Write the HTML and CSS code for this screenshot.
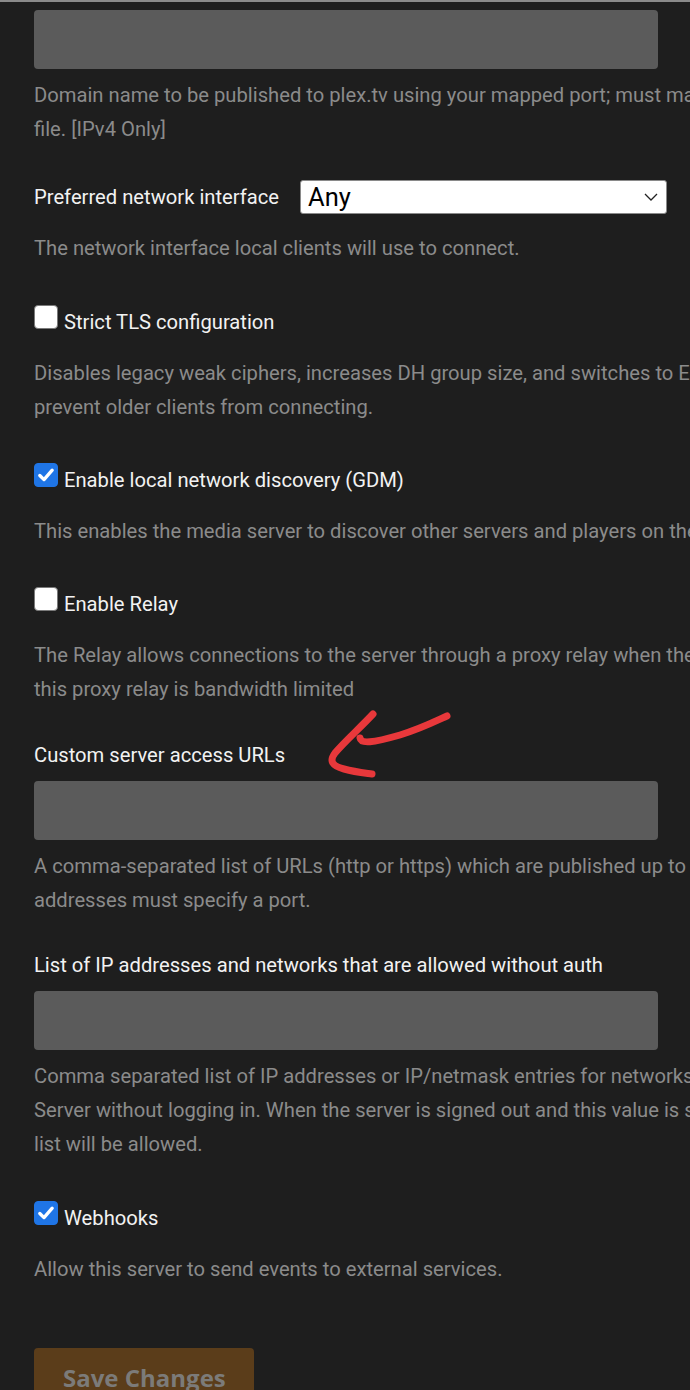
FILE: index.html
```html
<!DOCTYPE html>
<html lang="en">
<head>
<meta charset="utf-8">
<title>Network settings</title>
<link rel="stylesheet" href="styles.css">
</head>
<body>
<div class="page">
  <div class="settings">
    <div class="setting text-setting first">
      <div class="field"></div>
      <p class="desc">Domain name to be published to plex.tv using your mapped port; must match a name from the custom certificate<br>file. [IPv4 Only]</p>
    </div>

    <div class="setting select-setting">
      <div class="select-row">
        <span class="label">Preferred network interface</span>
        <div class="select">
          <span class="select-value">Any</span>
          <svg class="chevron" width="14" height="8" viewBox="0 0 14 8"><path d="M1 1 L7 7 L13 1" fill="none" stroke="#222" stroke-width="1.3"/></svg>
        </div>
      </div>
      <p class="desc">The network interface local clients will use to connect.</p>
    </div>

    <div class="setting check-setting">
      <div class="check-row"><span class="box"></span><span class="label">Strict TLS configuration</span></div>
      <p class="desc">Disables legacy weak ciphers, increases DH group size, and switches to ECDHE-only ciphers. May<br>prevent older clients from connecting.</p>
    </div>

    <div class="setting check-setting">
      <div class="check-row"><span class="box checked"><svg width="24" height="24" viewBox="0 0 24 24"><path d="M5.8 12.5 L10 16.6 L18.2 7.2" fill="none" stroke="#fff" stroke-width="3.3" stroke-linecap="round" stroke-linejoin="round"/></svg></span><span class="label">Enable local network discovery (GDM)</span></div>
      <p class="desc">This enables the media server to discover other servers and players on the local network.</p>
    </div>

    <div class="setting check-setting">
      <div class="check-row"><span class="box"></span><span class="label">Enable Relay</span></div>
      <p class="desc">The Relay allows connections to the server through a proxy relay when the server is not accessible otherwise. Note:<br>this proxy relay is bandwidth limited</p>
    </div>

    <div class="setting text-setting">
      <div class="label block">Custom server access URLs</div>
      <div class="field"></div>
      <p class="desc">A comma-separated list of URLs (http or https) which are published up to plex.tv for server discovery. Non-standard<br>addresses must specify a port.</p>
    </div>

    <div class="setting text-setting">
      <div class="label block">List of IP addresses and networks that are allowed without auth</div>
      <div class="field"></div>
      <p class="desc">Comma separated list of IP addresses or IP/netmask entries for networks that will be allowed to access Plex Media<br>Server without logging in. When the server is signed out and this value is set, only localhost and addresses on this<br>list will be allowed.</p>
    </div>

    <div class="setting check-setting">
      <div class="check-row"><span class="box checked"><svg width="24" height="24" viewBox="0 0 24 24"><path d="M5.8 12.5 L10 16.6 L18.2 7.2" fill="none" stroke="#fff" stroke-width="3.3" stroke-linecap="round" stroke-linejoin="round"/></svg></span><span class="label">Webhooks</span></div>
      <p class="desc">Allow this server to send events to external services.</p>
    </div>
  </div>

  <div class="actions">
    <button class="save" type="button">Save Changes</button>
  </div>

  <svg class="annotation" width="150" height="80" viewBox="0 0 150 80">
    <path d="M63 12 C50 26 34 40 25 51 C19 59 22 64 34 67 C45 70 55 71 62 72" fill="none" stroke="#e8383b" stroke-width="7" stroke-linecap="round" stroke-linejoin="round"/>
    <path d="M50 36 C51 42 62 41 90 33 C110 27 126 19 137 14" fill="none" stroke="#e8383b" stroke-width="7" stroke-linecap="round"/>
  </svg>
</div>
</body>
</html>
```

FILE: styles.css
```css
html, body {
  margin: 0;
  padding: 0;
  background: #1e1e1e;
}

body {
  font-family: Roboto, "Noto Sans", "Liberation Sans", sans-serif;
  overflow: hidden;
}

.page {
  position: relative;
  height: 1390px;
  border-top: 2px solid #8a8a8a;
  box-sizing: border-box;
  overflow: hidden;
}

.settings {
  padding-left: 34px;
}

.setting {
  margin: 0;
}

.setting.first {
  padding-top: 8px;
}

.label {
  color: #f2f2f2;
  font-size: 20.2px;
  line-height: 34px;
}

.label.block {
  display: block;
}

.desc {
  margin: 0;
  color: #8b8b8b;
  font-size: 20.2px;
  line-height: 34.2px;
  white-space: nowrap;
}

.field {
  width: 624px;
  height: 59px;
  background: #5b5b5b;
  border-radius: 4px;
}

.text-setting {
  margin-top: 31px;
}

.text-setting .field {
  margin: 9px 0;
}

.text-setting.first {
  margin-top: 0;
}

.text-setting.first .field {
  margin-top: 0;
}

.select-setting {
  margin-top: 34px;
}

.select-row {
  display: flex;
  align-items: center;
  gap: 21px;
  height: 34px;
  margin-bottom: 17px;
}

.select {
  box-sizing: border-box;
  width: 367px;
  height: 34px;
  background: #fff;
  border: 1px solid #8a8a8a;
  border-radius: 3px;
  display: flex;
  align-items: center;
  justify-content: space-between;
  padding: 0 6px 0 7px;
}

.select-value {
  color: #000;
  font-size: 25.5px;
  font-family: Roboto, "Liberation Sans", sans-serif;
}

.chevron {
  margin-right: 2px;
}

.check-setting {
  margin-top: 39px;
}

.check-row {
  height: 34px;
  line-height: 34px;
  margin-bottom: 17px;
}

.check-row .label {
  margin-left: 6px;
}

.box {
  display: inline-block;
  box-sizing: border-box;
  width: 24px;
  height: 24px;
  border-radius: 4px;
  background: #fff;
  border: 1px solid #7a7a7a;
  vertical-align: baseline;
}

.box.checked {
  background: #1f75e6;
  border-color: #1f75e6;
  position: relative;
}

.box.checked svg {
  position: absolute;
  left: -1px;
  top: -1px;
}

.actions {
  padding: 62px 0 0 34px;
}

.save {
  display: block;
  box-sizing: border-box;
  width: 220px;
  border: none;
  border-radius: 4px;
  background: #5b3d1a;
  color: #7c7b79;
  font-family: "Open Sans", "Liberation Sans", sans-serif;
  font-weight: 700;
  font-size: 24px;
  line-height: 30px;
  text-align: left;
  padding: 15px 0 30px 29px;
}

.annotation {
  position: absolute;
  left: 310px;
  top: 700px;
}
```
